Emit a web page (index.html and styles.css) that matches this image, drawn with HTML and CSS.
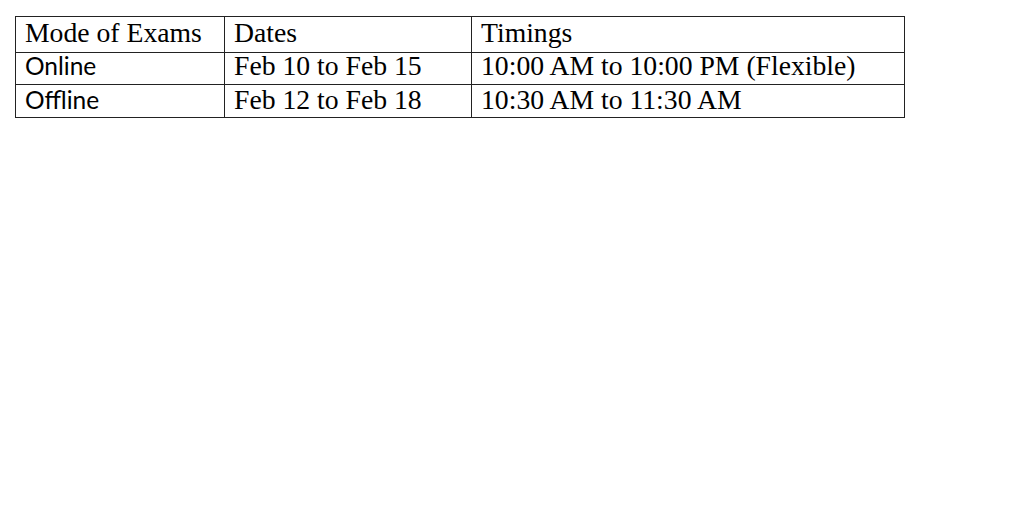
FILE: index.html
```html
<!DOCTYPE html>
<html>
<head>
<meta charset="utf-8">
<link rel="stylesheet" href="styles.css">
</head>
<body>
<table class="exams">
  <colgroup>
    <col class="c1"><col class="c2"><col class="c3">
  </colgroup>
  <tr class="head">
    <td class="serif">Mode of Exams</td>
    <td class="serif">Dates</td>
    <td class="serif">Timings</td>
  </tr>
  <tr class="row r1">
    <td class="sans">Online</td>
    <td class="serif">Feb 10 to Feb 15</td>
    <td class="serif">10:00 AM to 10:00 PM (Flexible)</td>
  </tr>
  <tr class="row r2">
    <td class="sans">Offline</td>
    <td class="serif">Feb 12 to Feb 18</td>
    <td class="serif">10:30 AM to 11:30 AM</td>
  </tr>
</table>
</body>
</html>
```
FILE: styles.css
```css
html, body {
  margin: 0;
  padding: 0;
  background: #fff;
}
body {
  padding: 16px 0 0 15px;
}
.exams {
  border-collapse: collapse;
  table-layout: fixed;
  width: 890px;
  color: #000;
}
.c1 { width: 209px; }
.c2 { width: 247px; }
.c3 { width: 433px; }
.exams td {
  border: 1px solid #222;
  padding: 0 0 0 9px;
  white-space: nowrap;
  vertical-align: baseline;
  line-height: 24px;
  overflow: visible;
}
.head td {
  padding-top: 4px;
  height: 31px;
}
.r1 td {
  padding-top: 1px;
  height: 30px;
}
.r2 td {
  padding-top: 3px;
  height: 29px;
}
.serif {
  font-family: "Liberation Serif", "Times New Roman", serif;
  font-size: 27.7px;
}
.sans {
  font-family: "Lato", "Open Sans", sans-serif;
  font-size: 24.5px;
}
```
